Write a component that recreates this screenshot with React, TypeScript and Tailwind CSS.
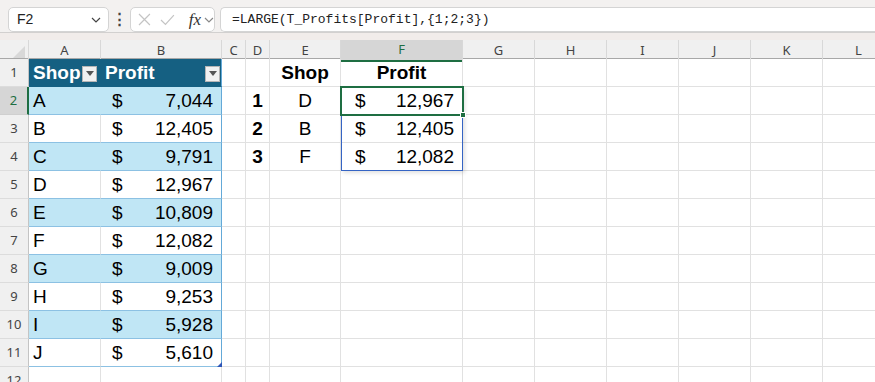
import React from "react";

const GRID =
  "grid grid-cols-[29px_72px_121px_24px_24px_71px_122px_72px_72px_72px_72px_72px_72px]";

const data: [string, string][] = [
  ["A", "7,044"],
  ["B", "12,405"],
  ["C", "9,791"],
  ["D", "12,967"],
  ["E", "10,809"],
  ["F", "12,082"],
  ["G", "9,009"],
  ["H", "9,253"],
  ["I", "5,928"],
  ["J", "5,610"],
];

const results: [string, string, string][] = [
  ["1", "D", "12,967"],
  ["2", "B", "12,405"],
  ["3", "F", "12,082"],
];

const cellBase =
  "h-[28px] border-r border-b border-[#e1e1e1] flex items-center overflow-hidden whitespace-nowrap pt-[2px]";

function Chevron({ className = "" }: { className?: string }) {
  return (
    <svg width="10" height="6" viewBox="0 0 10 6" className={className}>
      <path d="M1 1 L5 5 L9 1" fill="none" stroke="currentColor" strokeWidth="1.2" />
    </svg>
  );
}

function DropBtn() {
  return (
    <div className="w-[15px] h-[16px] bg-[#f1f1f1] border border-[#b5b5b5] flex items-center justify-center shrink-0">
      <svg width="8" height="5" viewBox="0 0 8 5">
        <path d="M0 0 L8 0 L4 5 Z" fill="#555" />
      </svg>
    </div>
  );
}

function Money({ v, pl }: { v: string; pl: string }) {
  return (
    <div className={`flex w-full justify-between pr-[8px] ${pl}`}>
      <span>$</span>
      <span>{v}</span>
    </div>
  );
}

function EmptyCells({ from }: { from: number }) {
  const n = 13 - from;
  return (
    <>
      {Array.from({ length: n }).map((_, i) => (
        <div key={i} className={cellBase} />
      ))}
    </>
  );
}

function RowHead({ n, active = false }: { n: number; active?: boolean }) {
  return (
    <div
      className={
        "h-[28px] border-b flex items-center justify-center text-[13px] font-['Noto_Sans',sans-serif] " +
        (active
          ? "bg-[#d6d6d6] text-[#1e6e42] border-[#cfcfcf] border-r-2 border-r-[#1e6e42]"
          : "bg-[#f0f0f0] text-[#444] border-[#dcdcdc] border-r border-r-[#c4c4c4]")
      }
    >
      {n}
    </div>
  );
}

export default function App() {
  const letters = ["A", "B", "C", "D", "E", "F", "G", "H", "I", "J", "K", "L"];
  return (
    <div className="w-[875px] h-[382px] overflow-hidden bg-white font-['Liberation_Sans',Arial,sans-serif] text-black">
      {/* Toolbar */}
      <div className="h-[40px] bg-[#f3f1f0] flex flex-col">
        <div className="flex items-start pt-[7px] h-[33px] border-b border-[#d2d0cf]">
          <div className="ml-[8px] w-[101px] h-[25px] bg-white border border-[#d4d4d4] rounded-[5px] flex items-center justify-between pl-[8px] pr-[7px] text-[14px] text-[#222]">
            <span>F2</span>
            <Chevron className="text-[#444]" />
          </div>
          <div className="w-[21px] h-[25px] flex items-center justify-center text-[#444] text-[15px] font-bold">
            ⋮
          </div>
          <div className="w-[85px] h-[25px] bg-white border border-[#d4d4d4] rounded-[5px] flex items-center pl-[7px] gap-[9px]">
            <svg width="13" height="13" viewBox="0 0 13 13">
              <path d="M1 1 L12 12 M12 1 L1 12" stroke="#c4c4c4" strokeWidth="1.2" fill="none" />
            </svg>
            <svg width="15" height="12" viewBox="0 0 15 12">
              <path d="M1 6 L5.5 10.5 L14 1" stroke="#c4c4c4" strokeWidth="1.2" fill="none" />
            </svg>
            <span className="font-['Liberation_Serif',serif] italic text-[17px] text-[#333] ml-[5px] leading-none">
              fx
            </span>
            <Chevron className="text-[#888] -ml-[6px]" />
          </div>
          <div className="ml-[5px] flex-1 h-[25px] bg-white border border-r-0 border-[#d4d4d4] rounded-l-[5px] flex items-center pl-[11px] font-['Liberation_Mono',monospace] text-[13px] text-[#222]">
            =LARGE(T_Profits[Profit],{"{"}1;2;3{"}"})
          </div>
        </div>
        <div className="flex-1 bg-[#f1ecea]" />
      </div>

      {/* Column header */}
      <div className={GRID + " h-[19px] bg-[#f0f0f0] border-b border-[#a8a8a8]"}>
        <div className="relative border-r border-[#d8d8d8]">
          <svg width="12" height="12" viewBox="0 0 12 12" className="absolute right-[3px] bottom-[3px]">
            <path d="M12 0 L12 12 L0 12 Z" fill="#d8d8d8" />
          </svg>
        </div>
        {letters.map((l) => (
          <div
            key={l}
            className={
              "flex items-center justify-center text-[13px] font-['Noto_Sans',sans-serif] border-r border-[#d8d8d8] " +
              (l === "F" ? "bg-[#d6d6d6] text-[#1e6e42] border-b-2 border-b-[#1e6e42] -mb-[1px]" : "text-[#444]")
            }
          >
            {l}
          </div>
        ))}
      </div>

      {/* Body */}
      <div className="relative">
        {/* Row 1 */}
        <div className={GRID + " text-[19px]"}>
          <RowHead n={1} />
          <div className={cellBase + " bg-[#156082] border-r-[#156082] border-b-[#156082] text-white font-bold pl-[4px] justify-between pr-[3px]"}>
            <span>Shop</span>
            <DropBtn />
          </div>
          <div className={cellBase + " bg-[#156082] border-r-[#64a9d8] border-b-[#156082] text-white font-bold pl-[4px] justify-between pr-[1px]"}>
            <span>Profit</span>
            <DropBtn />
          </div>
          <div className={cellBase} />
          <div className={cellBase} />
          <div className={cellBase + " justify-center font-bold"}>Shop</div>
          <div className={cellBase + " justify-center font-bold"}>Profit</div>
          <EmptyCells from={7} />
        </div>

        {data.map(([shop, val], i) => {
          const band = i % 2 === 0;
          const r = i + 2;
          const res = results[i];
          return (
            <div key={shop} className={GRID + " text-[19px]"}>
              <RowHead n={r} active={r === 2} />
              <div
                className={
                  cellBase +
                  " pl-[4px] border-b-[#8cc1e3] " +
                  (band ? "bg-[#c0e6f5] border-r-[#c0e6f5]" : "")
                }
              >
                {shop}
              </div>
              <div
                className={
                  cellBase +
                  " border-b-[#8cc1e3] border-r-[#64a9d8] " +
                  (band ? "bg-[#c0e6f5]" : "")
                }
              >
                <Money v={val} pl="pl-[11px]" />
              </div>
              <div className={cellBase} />
              <div className={cellBase + " justify-center font-bold"}>{res ? res[0] : ""}</div>
              <div className={cellBase + " justify-center"}>{res ? res[1] : ""}</div>
              <div className={cellBase}>{res ? <Money v={res[2]} pl="pl-[14px]" /> : null}</div>
              <EmptyCells from={7} />
            </div>
          );
        })}

        {/* Row 12 */}
        <div className={GRID + " text-[19px]"}>
          <RowHead n={12} />
          <EmptyCells from={1} />
        </div>

        {/* Table resize handle */}
        <svg width="5" height="5" viewBox="0 0 5 5" className="absolute left-[217px] top-[303px]">
          <path d="M5 0 L5 5 L0 5 Z" fill="#2f57b8" />
        </svg>

        {/* Spill range border */}
        <div className="absolute left-[341px] top-[28px] w-[122px] h-[84px] border border-[#3564c4] shadow-[2px_2px_4px_rgba(0,0,0,0.12)]" />
        {/* Active cell */}
        <div className="absolute left-[340px] top-[27px] w-[124px] h-[30px] border-2 border-[#1e6e42]" />
        <div className="absolute left-[460px] top-[53px] w-[6px] h-[6px] bg-[#1e6e42] border border-white" />
      </div>
    </div>
  );
}
